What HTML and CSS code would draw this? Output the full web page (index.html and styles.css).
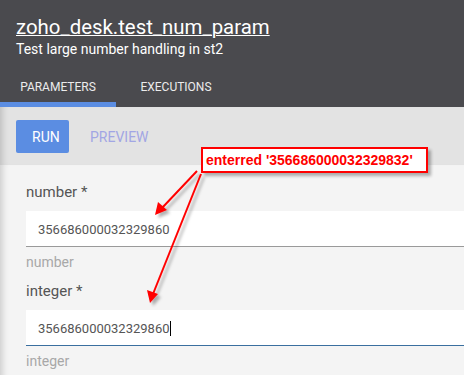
FILE: index.html
```html
<!DOCTYPE html>
<html lang="en">
<head>
    <meta charset="UTF-8">
    <title>zoho_desk.test_num_param</title>
    <link rel="stylesheet" href="styles.css">
</head>
<body>
    <div class="header">
        <h1 class="title"><a href="#">zoho_desk.test_num_param</a></h1>
        <p class="subtitle">Test large number handling in st2</p>
        <div class="tabs">
            <div class="tab active">PARAMETERS</div>
            <div class="tab tab-wide">EXECUTIONS</div>
        </div>
    </div>

    <div class="toolbar">
        <button class="btn-run">RUN</button>
        <button class="btn-preview">PREVIEW</button>
    </div>

    <div class="form">
        <div class="field">
            <label class="field-label">number *</label>
            <div class="field-input">356686000032329860</div>
            <div class="field-help">number</div>
        </div>
        <div class="field">
            <label class="field-label">integer *</label>
            <div class="field-input focused">356686000032329860<span class="caret"></span></div>
            <div class="field-help">integer</div>
        </div>
    </div>

    <!-- screenshot annotation -->
    <div class="note">enterred '356686000032329832'</div>
    <svg class="arrows" width="464" height="375" viewBox="0 0 464 375">
        <defs>
            <filter id="shade" x="-20%" y="-20%" width="160%" height="160%">
                <feDropShadow dx="3" dy="3" stdDeviation="1.5" flood-color="#000" flood-opacity="0.3"/>
            </filter>
        </defs>
        <g filter="url(#shade)" fill="#f00" stroke="#f00">
            <line x1="197" y1="171" x2="162" y2="208" stroke-width="2"/>
            <polygon points="155,215 158,202 167,210" stroke="none"/>
            <line x1="201" y1="174" x2="153" y2="294" stroke-width="2"/>
            <polygon points="150,303 147,290 158,294" stroke="none"/>
        </g>
    </svg>
</body>
</html>
```

FILE: styles.css
```css
body {
    margin: 0;
    font-family: Roboto, "Liberation Sans", sans-serif;
    background: #f4f4f4;
    position: relative;
    width: 464px;
    height: 375px;
    overflow: hidden;
}
.header {
    background: #4a4a4e;
    color: #fff;
    padding-top: 15px;
}
.title {
    margin: 0 0 0 16px;
    font-size: 20.4px;
    font-weight: 400;
    line-height: 24px;
}
.title a {
    color: #fff;
    text-decoration: underline;
    text-underline-offset: 1px;
    text-decoration-thickness: 1px;
}
.subtitle {
    margin: 1px 0 0 16px;
    font-size: 14px;
    line-height: 18px;
}
.tabs {
    display: flex;
    margin-top: 22px;
}
.tab {
    width: 114px;
    text-align: center;
    font-size: 12px;
    color: #ececec;
    height: 27px;
    box-sizing: border-box;
    border-bottom: 5px solid transparent;
}
.tab-wide {
    width: 120px;
}
.tab.active {
    border-bottom-color: #5b8de2;
    width: 116px;
}
.toolbar {
    background: #e3e3e3;
    height: 58px;
    box-sizing: border-box;
    padding: 13px 16px;
    display: flex;
    align-items: flex-start;
    gap: 5px;
    box-shadow: inset 8px 0 7px -6px rgba(0,0,0,0.18);
}
.toolbar button {
    font-family: inherit;
    font-size: 14px;
    border: none;
    border-radius: 2px;
    height: 33px;
    padding: 0 16px;
    cursor: pointer;
}
.btn-run {
    background: #5b8de2;
    color: #fff;
    width: 53px;
    padding: 0;
}
.btn-preview {
    background: transparent;
    color: #a2a6e4;
}
.form {
    padding: 17px 0 0 26px;
    box-shadow: inset 8px 0 7px -6px rgba(0,0,0,0.18);
    height: 210px;
}
.field {
    margin-bottom: 10px;
}
.field-label {
    display: block;
    font-size: 15px;
    color: #555;
    line-height: 20px;
    margin-bottom: 9px;
}
.field-input {
    background: #fff;
    height: 36px;
    box-sizing: border-box;
    border-bottom: 1px solid #9a9a9a;
    padding: 10px 12px 0;
    font-size: 13px;
    color: #555;
    line-height: 18px;
}
.field-input.focused {
    border-bottom-color: #3a6f9f;
}
.caret {
    display: inline-block;
    width: 1px;
    height: 15px;
    background: #000;
    vertical-align: -3px;
}
.field-help {
    font-size: 14px;
    color: #a8a8a8;
    line-height: 18px;
    margin-top: 6px;
}
.note {
    position: absolute;
    left: 201px;
    top: 147px;
    width: 227px;
    height: 26px;
    box-sizing: border-box;
    border: 2px solid #f00;
    background: #fff;
    color: #f00;
    font-family: "Liberation Sans", Arial, sans-serif;
    font-weight: bold;
    font-size: 14px;
    line-height: 22px;
    padding-left: 3px;
    box-shadow: 3px 3px 3px rgba(0,0,0,0.3);
}
.arrows {
    position: absolute;
    left: 0;
    top: 0;
    pointer-events: none;
}
```
